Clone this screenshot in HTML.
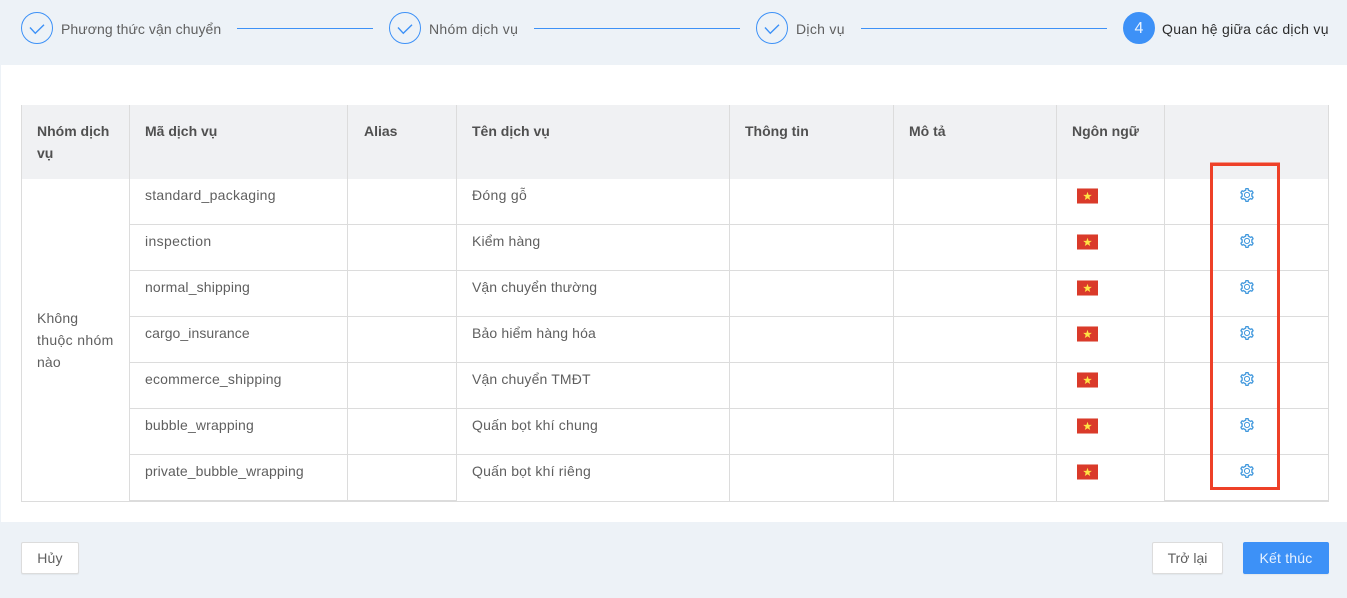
<!DOCTYPE html>
<html lang="vi"><head><meta charset="utf-8">
<style>
html,body{margin:0;padding:0;width:1347px;height:598px;overflow:hidden;background:#edf2f7;font-family:"Liberation Sans",sans-serif;font-size:14px;color:#5f5f5f}
div,span,svg{position:absolute;box-sizing:border-box}
.t{white-space:nowrap;line-height:22px;letter-spacing:.15px}
.h{font-weight:bold;color:#505050;letter-spacing:0}
.c{width:32px;height:32px;border:1px solid #3d91f7;border-radius:50%;top:12px}
.c svg{left:7px;top:7px}
.l{height:1px;background:#3d91f7;top:28px}
.v{width:1px;background:#dcdcdc}
.r{height:1px;background:#dcdcdc;left:129px;width:1200px}
.f{left:1077px;width:21px;height:16px;background:#da3a2a;border-top:1px solid #ea9a90;border-bottom:1px solid #ea9a90}
.f svg{left:6px;top:2px}
.g{left:1240px;width:14px;height:14px}
.b{height:32px;background:#fff;border:1px solid #dcdcdc;border-radius:2px;top:542px;line-height:30px;text-align:center;box-shadow:0 1px 1px rgba(0,0,0,.05);white-space:nowrap;letter-spacing:.2px}
</style></head><body>
<svg width="0" height="0" style="left:0;top:0"><defs>
<symbol id="gear" viewBox="64 64 896 896"><path fill="#3f97dd" stroke="#3f97dd" stroke-width="14" d="M924.8 625.7l-65.5-56c3.1-19 4.7-38.4 4.7-57.8s-1.6-38.8-4.7-57.8l65.5-56a32.03 32.03 0 0 0 9.3-35.2l-.9-2.6a443.74 443.74 0 0 0-79.7-137.9l-1.8-2.1a32.12 32.12 0 0 0-35.1-9.5l-81.3 28.9c-30-24.6-63.5-44-99.7-57.6l-15.7-85a32.05 32.05 0 0 0-25.8-25.7l-2.7-.5c-52.1-9.4-106.9-9.4-159 0l-2.7.5a32.05 32.05 0 0 0-25.8 25.7l-15.8 85.4a351.86 351.86 0 0 0-99 57.4l-81.9-29.1a32 32 0 0 0-35.1 9.5l-1.8 2.1a446.02 446.02 0 0 0-79.7 137.9l-.9 2.6c-4.5 12.5-.8 26.5 9.3 35.2l66.3 56.6c-3.1 18.8-4.6 38-4.6 57.1 0 19.2 1.5 38.4 4.6 57.1L99 625.5a32.03 32.03 0 0 0-9.3 35.2l.9 2.6c18.1 50.4 44.9 96.9 79.7 137.9l1.8 2.1a32.12 32.12 0 0 0 35.1 9.5l81.9-29.1c29.8 24.5 63.1 43.9 99 57.4l15.8 85.4a32.05 32.05 0 0 0 25.8 25.7l2.7.5a449.4 449.4 0 0 0 159 0l2.7-.5a32.05 32.05 0 0 0 25.8-25.7l15.7-85a350 350 0 0 0 99.7-57.6l81.3 28.9a32 32 0 0 0 35.1-9.5l1.8-2.1c34.8-41.1 61.6-87.5 79.7-137.9l.9-2.6c4.5-12.3.8-26.3-9.3-35zM788.3 465.9c2.5 15.1 3.8 30.6 3.8 46.1s-1.3 31-3.8 46.1l-6.6 40.1 74.7 63.9a370.03 370.03 0 0 1-42.6 73.6L721 702.8l-31.4 25.8c-23.9 19.6-50.5 35-79.3 45.8l-38.1 14.3-17.9 97a377.5 377.5 0 0 1-85 0l-17.9-97.2-37.8-14.5c-28.5-10.8-55-26.2-78.7-45.7l-31.4-25.9-93.4 33.2c-17-22.9-31.2-47.6-42.6-73.6l75.5-64.5-6.5-40c-2.4-14.9-3.7-30.3-3.7-45.5 0-15.3 1.2-30.6 3.7-45.5l6.5-40-75.5-64.5c11.3-26.1 25.6-50.7 42.6-73.6l93.4 33.2 31.4-25.9c23.7-19.5 50.2-34.9 78.7-45.7l37.9-14.3 17.9-97.2c28.1-3.2 56.8-3.2 85 0l17.9 97 38.1 14.3c28.7 10.8 55.4 26.2 79.3 45.8l31.4 25.8 92.8-32.9c17 22.9 31.2 47.6 42.6 73.6L781.8 426l6.5 39.9z"/><circle cx="512" cy="507" r="165" fill="none" stroke="#3f97dd" stroke-width="64"/></symbol>
<symbol id="chk" viewBox="0 0 16 16"><path d="M1 7.5 6.3 13.3 15 4.7" fill="none" stroke="#3d91f7" stroke-width="1.4"/></symbol>
<symbol id="star" viewBox="0 0 10 10"><path fill="#ffe445" d="M5 .3 6.2 3.7 9.8 3.8 7 6 8 9.5 5 7.5 2 9.5 3 6 .2 3.8 3.8 3.7Z"/></symbol>
</defs></svg>

<!-- steps -->
<div class="c" style="left:21px"><svg width="16" height="16"><use href="#chk"/></svg></div>
<span class="t" style="left:61px;top:18px;letter-spacing:.07px">Phương thức vận chuyển</span>
<div class="l" style="left:237px;width:136px"></div>
<div class="c" style="left:389px"><svg width="16" height="16"><use href="#chk"/></svg></div>
<span class="t" style="left:429px;top:18px;letter-spacing:.3px">Nhóm dịch vụ</span>
<div class="l" style="left:534px;width:206px"></div>
<div class="c" style="left:756px"><svg width="16" height="16"><use href="#chk"/></svg></div>
<span class="t" style="left:796px;top:18px;letter-spacing:.3px">Dịch vụ</span>
<div class="l" style="left:861px;width:246px"></div>
<div class="c" style="left:1123px;background:#3d91f7;color:#e8f2ff;font-size:16px;line-height:31px;text-align:center">4</div>
<span class="t" style="left:1162px;top:18px;color:#2b2b2b;letter-spacing:.3px">Quan hệ giữa các dịch vụ</span>

<!-- panel -->
<div style="left:1px;top:65px;width:1346px;height:457px;background:#fff"></div>
<div style="left:22px;top:105px;width:1306px;height:74px;background:#f0f1f3"></div>

<!-- grid -->
<div class="v" style="left:21px;top:105px;height:397px"></div>
<div class="v" style="left:129px;top:105px;height:396px"></div>
<div class="v" style="left:347px;top:105px;height:396px"></div>
<div class="v" style="left:456px;top:105px;height:396px"></div>
<div class="v" style="left:729px;top:105px;height:396px"></div>
<div class="v" style="left:893px;top:105px;height:396px"></div>
<div class="v" style="left:1056px;top:105px;height:396px"></div>
<div class="v" style="left:1164px;top:105px;height:396px"></div>
<div class="v" style="left:1328px;top:105px;height:397px"></div>
<div class="r" style="top:224px"></div>
<div class="r" style="top:270px"></div>
<div class="r" style="top:316px"></div>
<div class="r" style="top:362px"></div>
<div class="r" style="top:408px"></div>
<div class="r" style="top:454px"></div>
<div style="left:21px;top:501px;width:1308px;height:1px;background:#dcdcdc"></div>
<div style="left:129px;top:500px;width:328px;height:1px;background:#dcdcdc"></div>
<div style="left:1164px;top:500px;width:165px;height:1px;background:#dcdcdc"></div>

<!-- header -->
<span class="t h" style="left:37px;top:120px">Nhóm dịch</span>
<span class="t h" style="left:37px;top:142px">vụ</span>
<span class="t h" style="left:145px;top:120px">Mã dịch vụ</span>
<span class="t h" style="left:364px;top:120px">Alias</span>
<span class="t h" style="left:472px;top:120px">Tên dịch vụ</span>
<span class="t h" style="left:745px;top:120px">Thông tin</span>
<span class="t h" style="left:909px;top:120px">Mô tả</span>
<span class="t h" style="left:1072px;top:120px">Ngôn ngữ</span>

<!-- body -->
<span class="t" style="left:37px;top:307px">Không</span>
<span class="t" style="left:37px;top:329px;letter-spacing:.35px">thuộc nhóm</span>
<span class="t" style="left:37px;top:351px">nào</span>

<span class="t" style="left:145px;top:184px;letter-spacing:.26px">standard_packaging</span>
<span class="t" style="left:145px;top:230px;letter-spacing:.35px">inspection</span>
<span class="t" style="left:145px;top:276px">normal_shipping</span>
<span class="t" style="left:145px;top:322px;letter-spacing:.08px">cargo_insurance</span>
<span class="t" style="left:145px;top:368px;letter-spacing:.2px">ecommerce_shipping</span>
<span class="t" style="left:145px;top:414px">bubble_wrapping</span>
<span class="t" style="left:145px;top:460px;letter-spacing:.1px">private_bubble_wrapping</span>

<span class="t" style="left:472px;top:184px;letter-spacing:.3px">Đóng gỗ</span>
<span class="t" style="left:472px;top:230px">Kiểm hàng</span>
<span class="t" style="left:472px;top:276px;letter-spacing:.09px">Vận chuyển thường</span>
<span class="t" style="left:472px;top:322px">Bảo hiểm hàng hóa</span>
<span class="t" style="left:472px;top:368px">Vận chuyển TMĐT</span>
<span class="t" style="left:472px;top:414px;letter-spacing:.21px">Quấn bọt khí chung</span>
<span class="t" style="left:472px;top:460px;letter-spacing:.21px">Quấn bọt khí riêng</span>

<div class="f" style="top:188px"><svg width="9" height="10"><use href="#star"/></svg></div>
<div class="f" style="top:234px"><svg width="9" height="10"><use href="#star"/></svg></div>
<div class="f" style="top:280px"><svg width="9" height="10"><use href="#star"/></svg></div>
<div class="f" style="top:326px"><svg width="9" height="10"><use href="#star"/></svg></div>
<div class="f" style="top:372px"><svg width="9" height="10"><use href="#star"/></svg></div>
<div class="f" style="top:418px"><svg width="9" height="10"><use href="#star"/></svg></div>
<div class="f" style="top:464px"><svg width="9" height="10"><use href="#star"/></svg></div>

<svg class="g" style="top:188px"><use href="#gear" width="14" height="14"/></svg>
<svg class="g" style="top:234px"><use href="#gear" width="14" height="14"/></svg>
<svg class="g" style="top:280px"><use href="#gear" width="14" height="14"/></svg>
<svg class="g" style="top:326px"><use href="#gear" width="14" height="14"/></svg>
<svg class="g" style="top:372px"><use href="#gear" width="14" height="14"/></svg>
<svg class="g" style="top:418px"><use href="#gear" width="14" height="14"/></svg>
<svg class="g" style="top:464px"><use href="#gear" width="14" height="14"/></svg>

<div style="left:1210px;top:162px;width:70px;height:1px;background:#f29a8c"></div>
<div style="left:1210px;top:163px;width:70px;height:327px;border:3px solid #ee4028"></div>

<!-- footer -->
<div class="b" style="left:21px;width:58px">Hủy</div>
<div class="b" style="left:1152px;width:71px;letter-spacing:0">Trở lại</div>
<div class="b" style="left:1243px;width:86px;background:#3d91f7;border-color:#3d91f7;color:#e8f2ff">Kết thúc</div>
</body></html>
